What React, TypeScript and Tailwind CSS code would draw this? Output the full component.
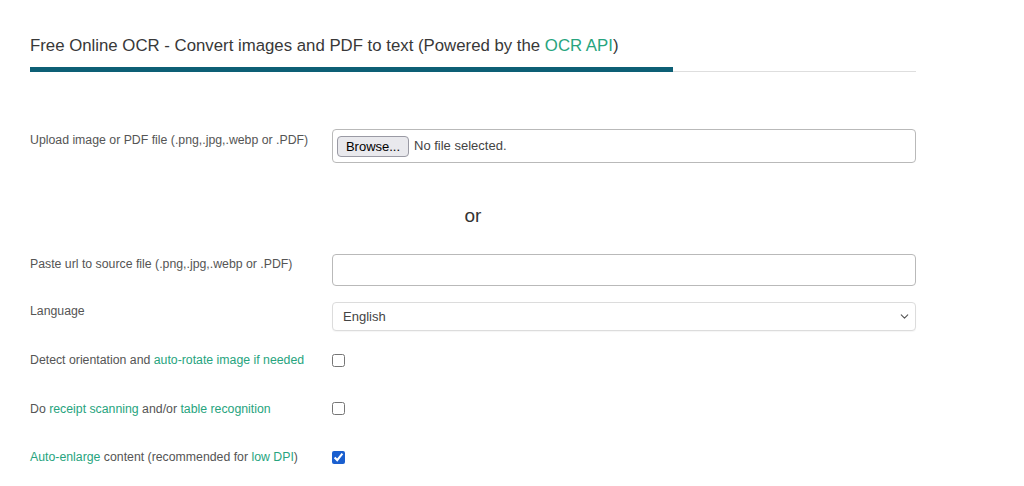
import { ChevronDown } from 'lucide-react'

const font = { fontFamily: '"Liberation Sans", Arial, sans-serif' }

function Link({ children }: { children: string }) {
  return <span className="text-[#27a47e]">{children}</span>
}

function Label({ children }: { children: React.ReactNode }) {
  return <div className="w-[302px] shrink-0 text-[12.3px] leading-[16px] text-[#555]">{children}</div>
}

function CheckRow({ label, checked }: { label: React.ReactNode; checked?: boolean }) {
  return (
    <div className="flex items-center h-[16px]">
      <Label>{label}</Label>
      <input
        type="checkbox"
        defaultChecked={checked}
        className="m-0 h-[13px] w-[13px] accent-[#1a5fcf]"
      />
    </div>
  )
}

export default function App() {
  return (
    <div className="min-h-[486px] bg-white" style={font}>
      <div className="ml-[30px] w-[886px] pt-[36px]">
        <h1 className="text-[16.8px] leading-[20px] text-[#383838]">
          Free Online OCR - Convert images and PDF to text (Powered by the <Link>OCR API</Link>)
        </h1>
        <div className="mt-[11px] flex items-end">
          <div className="h-[5px] w-[643px] bg-[#0d5f75]" />
          <div className="h-px flex-1 bg-[#dedede]" />
        </div>

        <div className="mt-[57px] flex items-start">
          <div className="pt-[3px]">
            <Label>Upload image or PDF file (.png,.jpg,.webp or .PDF)</Label>
          </div>
          <div className="flex h-[34px] flex-1 items-center gap-[5px] rounded-[4px] border border-[#b9b9b9] px-[4px]">
            <button
              type="button"
              className="h-[21px] w-[72px] rounded-[4px] border border-[#9a9aa4] bg-[#e9e9ed] text-[13px] leading-none text-black"
            >
              Browse...
            </button>
            <span className="text-[13px] text-[#444]">No file selected.</span>
          </div>
        </div>

        <div className="mt-[43px] flex">
          <div className="w-[302px] shrink-0" />
          <div className="w-[282px] text-center text-[19px] leading-[20px] text-[#333]">or</div>
        </div>

        <div className="mt-[28px] flex items-start">
          <div className="pt-[2px]">
            <Label>Paste url to source file (.png,.jpg,.webp or .PDF)</Label>
          </div>
          <input
            type="text"
            className="h-[32px] flex-1 rounded-[4px] border border-[#b9b9b9] px-[10px] text-[13px] outline-none"
          />
        </div>

        <div className="mt-[16px] flex items-start">
          <div className="pt-[1px]">
            <Label>Language</Label>
          </div>
          <div className="relative flex-1">
            <select
              defaultValue="eng"
              className="h-[29px] w-full appearance-none rounded-[4px] border border-[#dcdcdc] bg-white px-[10px] text-[13px] text-[#444] shadow-[0_1px_1px_rgba(0,0,0,0.04)] outline-none"
              style={font}
            >
              <option value="eng">English</option>
            </select>
            <ChevronDown
              size={13}
              strokeWidth={2}
              className="pointer-events-none absolute right-[5px] top-[8px] text-[#555]"
            />
          </div>
        </div>

        <div className="mt-[21px] flex flex-col gap-[32.5px]">
          <CheckRow
            label={
              <>
                Detect orientation and <Link>auto-rotate image if needed</Link>
              </>
            }
          />
          <CheckRow
            label={
              <>
                Do <Link>receipt scanning</Link> and/or <Link>table recognition</Link>
              </>
            }
          />
          <CheckRow
            checked
            label={
              <>
                <Link>Auto-enlarge</Link> content (recommended for <Link>low DPI</Link>)
              </>
            }
          />
        </div>
      </div>
    </div>
  )
}
